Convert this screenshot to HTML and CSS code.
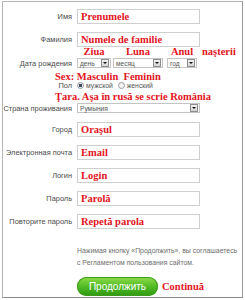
FILE: index.html
```html
<!DOCTYPE html>
<html>
    <head>
        <meta charset="utf-8">
        <title>Регистрация</title>
        <link rel="stylesheet" href="styles.css">
    </head>
    <body>
        <div class="frame">
            <div class="row first">
                <div class="label">Имя</div>
                <div class="field"><span class="note">Prenumele</span></div>
            </div>
            <div class="row">
                <div class="label">Фамилия</div>
                <div class="field"><span class="note">Numele de familie</span></div>
            </div>
            <div class="annot dates">
                <span class="w-day">Ziua</span>
                <span class="w-month">Luna</span>
                <span class="w-year">Anul</span>
                <span class="after">naşterii</span>
            </div>
            <div class="row small">
                <div class="label">Дата рождения</div>
                <div class="selects">
                    <div class="select w-day"><span>день</span><i class="btn"></i></div>
                    <div class="select w-month"><span>месяц</span><i class="btn"></i></div>
                    <div class="select w-year"><span>год</span><i class="btn"></i></div>
                </div>
            </div>
            <div class="annot wide sex">Sex: Masculin&nbsp; Feminin</div>
            <div class="row radios">
                <div class="label">Пол</div>
                <div class="choice">
                    <i class="radio on"></i><span>мужской</span>
                    <i class="radio"></i><span>женский</span>
                </div>
            </div>
            <div class="annot wide country">Ţara. Aşa în rusă se scrie România</div>
            <div class="row small">
                <div class="label">Страна проживания</div>
                <div class="select full"><span>Румыния</span><i class="btn"></i></div>
            </div>
            <div class="row gap">
                <div class="label">Город</div>
                <div class="field"><span class="note">Oraşul</span></div>
            </div>
            <div class="row">
                <div class="label">Электронная почта</div>
                <div class="field"><span class="note">Email</span></div>
            </div>
            <div class="row">
                <div class="label">Логин</div>
                <div class="field"><span class="note">Login</span></div>
            </div>
            <div class="row">
                <div class="label">Пароль</div>
                <div class="field"><span class="note">Parolă</span></div>
            </div>
            <div class="row">
                <div class="label">Повторите пароль</div>
                <div class="field"><span class="note">Repetă parola</span></div>
            </div>
            <div class="terms">Нажимая кнопку «Продолжить», вы соглашаетесь<br>с Регламентом пользования сайтом.</div>
            <div class="submit">
                <div class="button">Продолжить</div>
                <span class="note">Continuă</span>
            </div>
        </div>
    </body>
</html>
```

FILE: styles.css
```css
html, body {
    margin: 0;
    background: #fff;
}
.frame {
    margin: 1px 0 0 2px;
    width: 239px;
    height: 295px;
    border: 1px solid #b4b4b4;
    border-bottom-color: #8a8a8a;
    border-right-color: #9a9a9a;
    font-family: "Liberation Sans", Arial, sans-serif;
    overflow: hidden;
}
.row {
    display: flex;
    align-items: center;
    height: 15px;
    margin-top: 8px;
}
.row.first {
    margin-top: 7px;
}
.row.small {
    height: 10px;
    margin-top: 1px;
}
.row.radios {
    height: 8px;
    margin-top: 0;
}
.row.gap {
    margin-top: 9px;
}
.label {
    width: 69px;
    margin-right: 5px;
    text-align: right;
    font-size: 7.4px;
    color: #4a4a4a;
    white-space: nowrap;
}
.field {
    box-sizing: border-box;
    width: 123px;
    height: 15px;
    border: 1px solid #cfcfcf;
    background: #fff;
    padding-left: 3px;
    display: flex;
    align-items: center;
}
.note {
    font-family: "Liberation Serif", "Times New Roman", serif;
    font-weight: bold;
    font-size: 10.5px;
    color: #e2141c;
    white-space: nowrap;
}
.annot {
    font-family: "Liberation Serif", "Times New Roman", serif;
    font-weight: bold;
    font-size: 10.5px;
    line-height: 10px;
    height: 10px;
    color: #e2141c;
    white-space: nowrap;
}
.annot.dates {
    display: flex;
    padding-left: 74px;
}
.annot.dates span {
    text-align: center;
}
.annot.wide {
    padding-left: 52px;
}
.annot.sex {
    margin-top: 3.5px;
}
.annot.country {
    margin-top: 2.5px;
}
.w-day {
    width: 34px;
}
.w-month {
    width: 50px;
    margin-left: 2px;
}
.w-year {
    width: 30px;
    margin-left: 4px;
}
.annot .after {
    margin-left: 5px;
}
.selects {
    display: flex;
}
.select {
    box-sizing: border-box;
    height: 10px;
    border: 1px solid #c4c4c4;
    background: #fff;
    display: flex;
    align-items: center;
    justify-content: space-between;
    padding: 0 1px 0 2px;
    font-size: 6.6px;
    color: #555;
}
.select.full {
    width: 123px;
}
.btn {
    box-sizing: border-box;
    width: 8px;
    height: 8px;
    border: 1px solid #8c8c8c;
    background: linear-gradient(#f2f2f2, #d4d4d4);
    position: relative;
}
.btn::after {
    content: "";
    position: absolute;
    left: 1px;
    top: 2px;
    border-left: 2px solid transparent;
    border-right: 2px solid transparent;
    border-top: 2px solid #111;
}
.choice {
    display: flex;
    align-items: center;
    font-size: 6.8px;
    color: #555;
}
.radio {
    box-sizing: border-box;
    width: 7px;
    height: 7px;
    border-radius: 50%;
    border: 1px solid #9a9a9a;
    background: #f4f4f4;
    margin-right: 2px;
}
.radio.on {
    background: radial-gradient(circle, #3a4a5a 0, #3a4a5a 1.4px, #e8eef4 1.8px);
}
.choice span + .radio {
    margin-left: 5px;
}
.terms {
    margin: 16px 0 0 74px;
    width: 166px;
    font-size: 6.9px;
    line-height: 12px;
    color: #6e6e6e;
    white-space: nowrap;
}
.submit {
    display: flex;
    align-items: center;
    margin: 8px 0 0 74px;
}
.button {
    width: 81px;
    height: 19px;
    border-radius: 10px;
    background: linear-gradient(#8fdc4a, #4cb823 55%, #2f9612);
    box-shadow: inset 0 0 0 1px #3c9c1a;
    color: #fff;
    font-size: 10px;
    line-height: 19px;
    text-align: center;
    margin-right: 4px;
}
```
